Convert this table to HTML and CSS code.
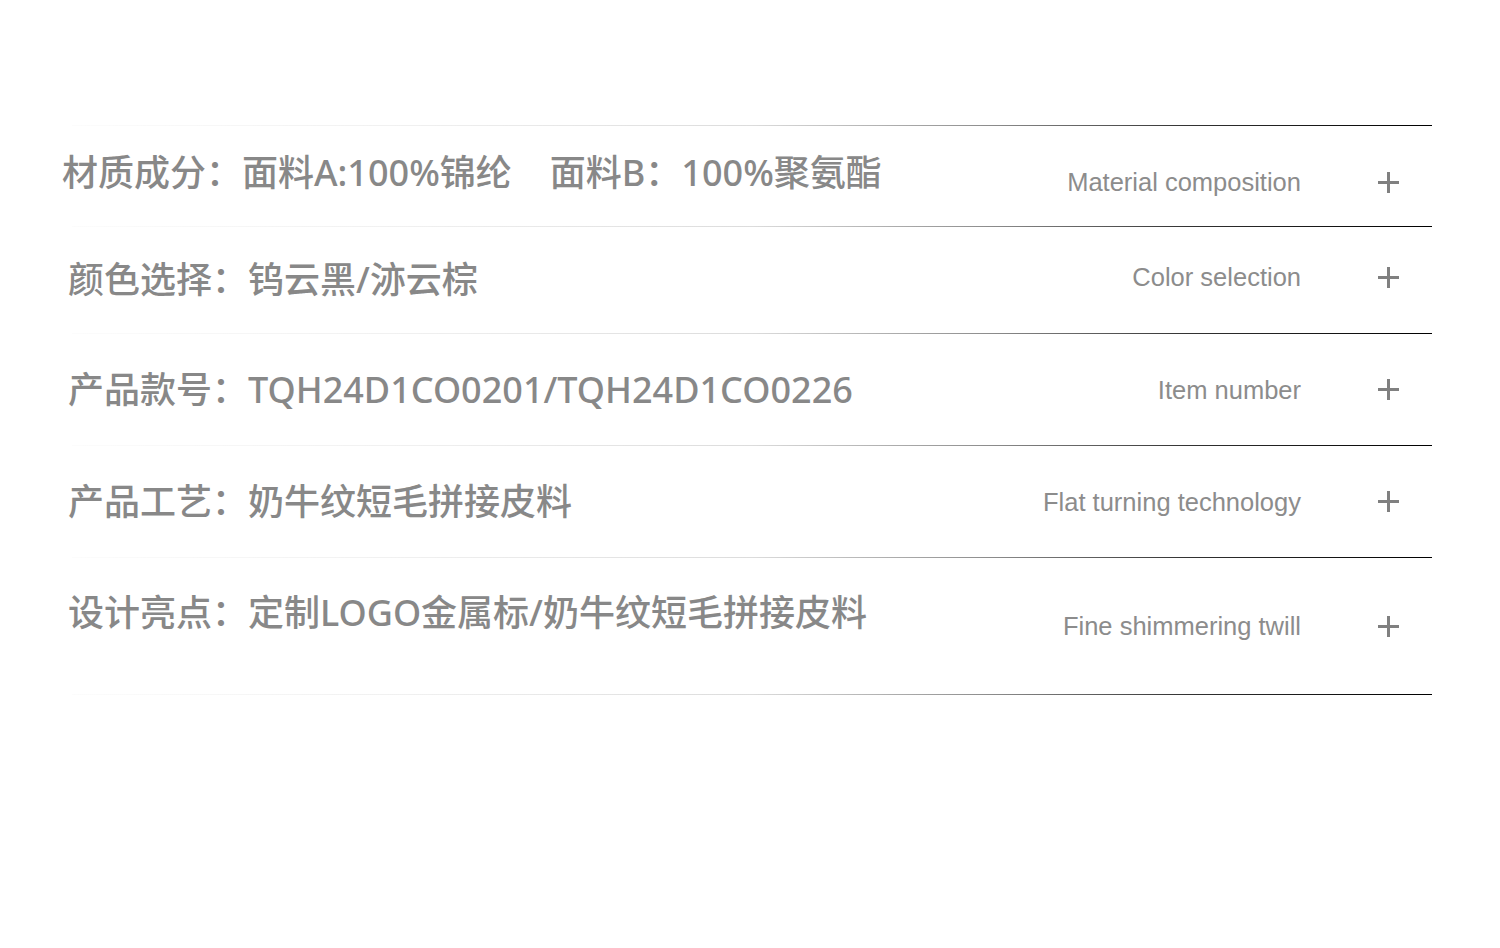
FILE: index.html
```html
<!DOCTYPE html>
<html lang="zh-CN">
<head>
<meta charset="utf-8">
<title>产品信息</title>
<link rel="stylesheet" href="styles.css">
</head>
<body>
<section class="spec">
  <div class="rule"></div>
  <div class="row row-1">
    <div class="zh zh-wide zh-up">材质成分：面料A:100%锦纶<span class="sep"></span>面料B：100%聚氨酯</div>
    <div class="side side-down"><span class="en">Material composition</span><span class="plus"></span></div>
  </div>
  <div class="rule"></div>
  <div class="row row-2">
    <div class="zh">颜色选择：钨云黑/洂云棕</div>
    <div class="side side-up"><span class="en">Color selection</span><span class="plus"></span></div>
  </div>
  <div class="rule"></div>
  <div class="row row-3">
    <div class="zh">产品款号：TQH24D1CO0201/TQH24D1CO0226</div>
    <div class="side"><span class="en">Item number</span><span class="plus"></span></div>
  </div>
  <div class="rule"></div>
  <div class="row row-3">
    <div class="zh">产品工艺：奶牛纹短毛拼接皮料</div>
    <div class="side"><span class="en">Flat turning technology</span><span class="plus"></span></div>
  </div>
  <div class="rule"></div>
  <div class="row row-5">
    <div class="zh zh-high">设计亮点：定制LOGO金属标/奶牛纹短毛拼接皮料</div>
    <div class="side"><span class="en">Fine shimmering twill</span><span class="plus"></span></div>
  </div>
  <div class="rule"></div>
</section>
</body>
</html>
```

FILE: styles.css
```css
html, body {
  margin: 0;
  padding: 0;
  background: #fff;
}

.spec {
  width: 1372px;
  margin-left: 62px;
  padding-top: 125px;
}

.rule {
  height: 1px;
  margin-left: 10px;
  width: 1360px;
  background: linear-gradient(90deg, #fcfcfc 0%, #f0f0f0 25%, #dcdcdc 50%, #8a8a8a 68%, #333 82%, #000 100%);
}

.row {
  display: flex;
  align-items: center;
  justify-content: space-between;
}

.row-1 { height: 100px; }
.row-2 { height: 106px; }
.row-3 { height: 111px; }
.row-5 { height: 136px; }

.zh {
  padding-left: 6px;
  font-family: "Noto Sans", "Noto Sans CJK SC", sans-serif;
  font-size: 36px;
  font-weight: 500;
  color: #888;
  line-height: 40px;
  white-space: nowrap;
}

.zh-wide { padding-left: 0; }
.zh-up { margin-top: -6px; }
.zh-high { margin-top: -26px; }

.sep {
  display: inline-block;
  width: 38px;
}

.side {
  display: flex;
  align-items: center;
  padding-right: 35px;
}

.side-down { margin-top: 12px; }
.side-up { margin-top: -6px; }

.en {
  font-family: "Liberation Sans", Arial, sans-serif;
  font-size: 25.5px;
  color: #8c8c8c;
  line-height: 30px;
  white-space: nowrap;
}

.plus {
  position: relative;
  display: inline-block;
  width: 21px;
  height: 21px;
  margin-left: 77px;
}

.plus::before,
.plus::after {
  content: "";
  position: absolute;
  background: #808080;
}

.plus::before {
  left: 0;
  right: 0;
  top: 9px;
  height: 3px;
}

.plus::after {
  top: 0;
  bottom: 0;
  left: 9px;
  width: 3px;
}
```
